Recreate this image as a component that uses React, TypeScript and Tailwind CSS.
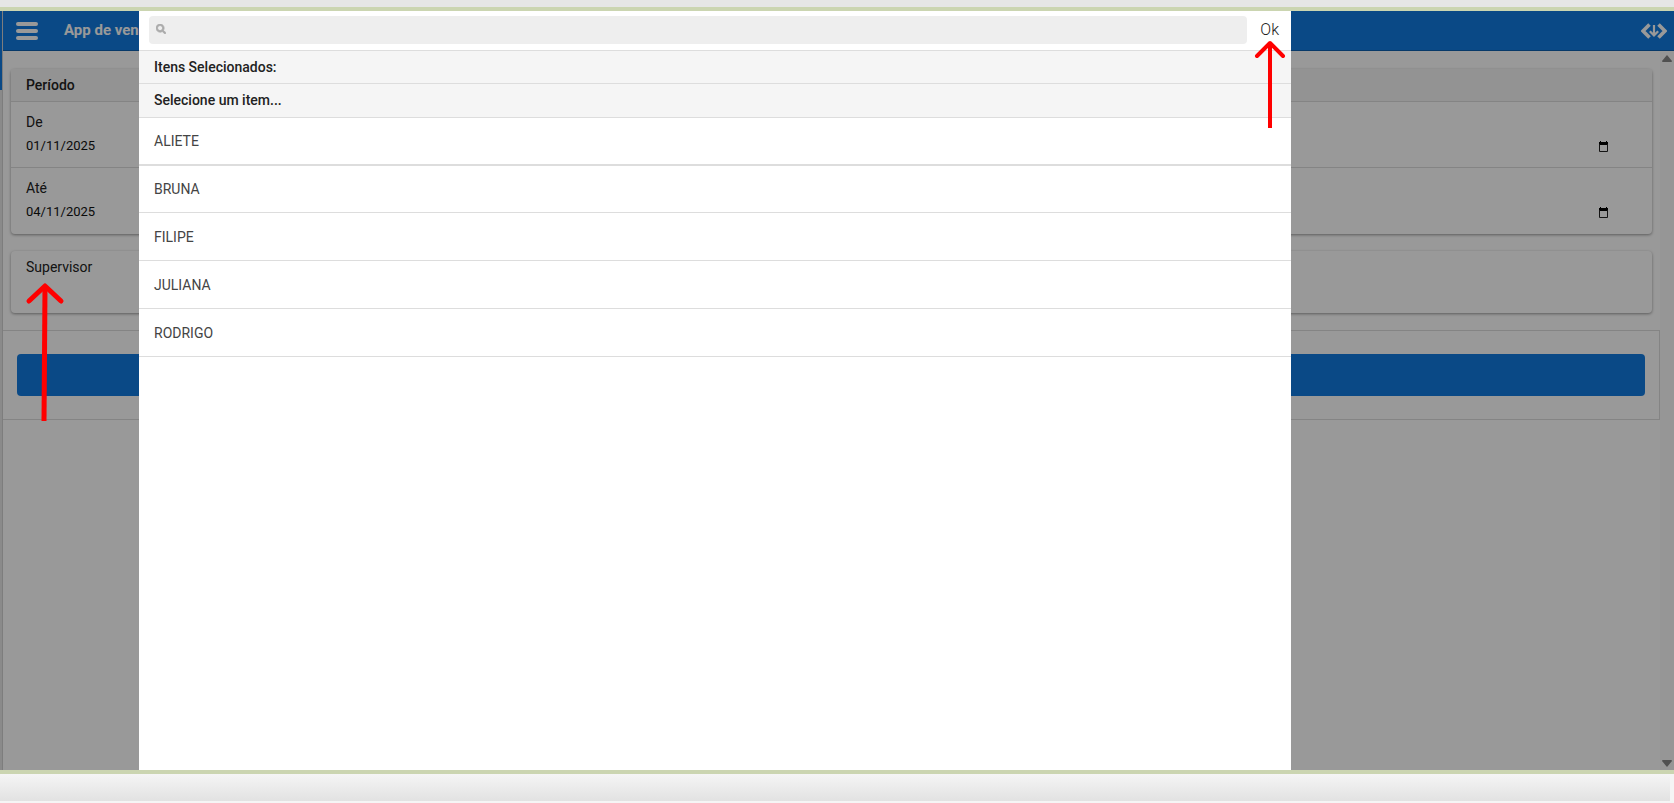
import { FaSearch } from "react-icons/fa";

const people = ["ALIETE", "BRUNA", "FILIPE", "JULIANA", "RODRIGO"];

function CodeDownloadIcon() {
  return (
    <svg width="26" height="16" viewBox="0 0 26 16" fill="none" stroke="white" aria-hidden="true">
      <path d="M8.5 1.5 L2 8 L8.5 14.5 M17.5 1.5 L24 8 L17.5 14.5" strokeWidth="3.6" />
      <path d="M13 2 V12 M8.8 8.2 L13 12.4 L17.2 8.2" strokeWidth="2.2" />
    </svg>
  );
}

function CalendarIcon() {
  return (
    <svg width="9" height="11" viewBox="0 0 9 11" aria-hidden="true">
      <path d="M0 1 H1 V0 H2 V1 H7 V0 H8 V1 H9 V4 H0 Z" fill="black" />
      <path d="M0.5 3 V10.5 H8.5 V3" fill="none" stroke="#222" />
    </svg>
  );
}

function DateRow({ id, label, value }: { id: string; label: string; value: string }) {
  return (
    <div className="flex h-[66px] flex-col px-[15px] pt-2.5">
      <label htmlFor={id} className="text-sm leading-5 text-[#222]">
        {label}
      </label>
      <div className="flex h-7 items-center">
        <input
          id={id}
          type="text"
          defaultValue={value}
          className="min-w-0 flex-1 bg-transparent text-[13px] text-[#111] outline-none"
        />
        <button type="button" aria-label={`Calendário: ${label}`} className="mr-[29px]">
          <CalendarIcon />
        </button>
      </div>
    </div>
  );
}

function UpArrow({ tall }: { tall?: boolean }) {
  return tall ? (
    <svg width="40" height="142" viewBox="0 0 40 142" fill="none" stroke="red" aria-hidden="true">
      <path d="M20 6 L19 140" strokeWidth="5" />
      <path d="M4 20 L20 5 L36 20" strokeWidth="5" strokeLinecap="round" strokeLinejoin="round" />
    </svg>
  ) : (
    <svg width="32" height="88" viewBox="0 0 32 88" fill="none" stroke="red" aria-hidden="true">
      <path d="M16 3 V88" strokeWidth="4" />
      <path d="M3 16 L16 3 L29 16" strokeWidth="4" strokeLinecap="round" strokeLinejoin="round" />
    </svg>
  );
}

function Page() {
  return (
    <div className="flex flex-1">
      <div className="w-[3px] shrink-0 border-r border-[#d0d0d0] bg-[#e6e6e6]">
        <div className="h-[79px] bg-[#127bdf]" />
      </div>
      <div className="flex min-w-0 flex-1 flex-col">
        <header className="flex h-10 items-center justify-between border-b border-[#0c60b0] bg-[#127bdf] pr-[7px] pl-[13px]">
          <div className="flex items-center gap-[26px]">
            <button type="button" aria-label="Menu" className="flex w-[22px] flex-col gap-[3px]">
              <span className="h-1 rounded-sm bg-white" />
              <span className="h-1 rounded-sm bg-white" />
              <span className="h-1 rounded-sm bg-white" />
            </button>
            <h1 className="text-[15px] font-bold text-white">App de vendas</h1>
          </div>
          <button type="button" aria-label="Baixar código">
            <CodeDownloadIcon />
          </button>
        </header>
        <div className="flex flex-1">
          <main className="min-w-0 flex-1 pt-[18px]">
            <section className="mx-2 divide-y divide-[#ddd] rounded-sm shadow-[0_1px_3px_rgba(0,0,0,0.4)]">
              <h2 className="h-[33px] bg-[#f5f5f5] px-[15px] text-sm leading-8 font-medium text-[#222]">Período</h2>
              <DateRow id="from" label="De" value="01/11/2025" />
              <DateRow id="to" label="Até" value="04/11/2025" />
            </section>
            <section className="mx-2 mt-[17px] h-[62px] rounded-sm px-[15px] pt-1.5 shadow-[0_1px_3px_rgba(0,0,0,0.4)]">
              <button type="button" className="block text-sm leading-5 text-[#222]">
                Supervisor
              </button>
            </section>
            <div className="mt-[17px] border-y border-r border-[#ddd] px-3.5 py-[23px]">
              <button type="button" aria-label="Confirmar" className="block h-[42px] w-full rounded bg-[#127bdf]" />
            </div>
          </main>
          <div className="flex w-[14px] shrink-0 flex-col items-center justify-between bg-[#fafafa] pt-1 pb-[3px]">
            <svg width="10" height="7" viewBox="0 0 10 7" aria-hidden="true">
              <path d="M5 0 L10 6 Q10 7 9 7 H1 Q0 7 0 6 Z" fill="#858585" />
            </svg>
            <svg width="10" height="7" viewBox="0 0 10 7" aria-hidden="true">
              <path d="M5 7 L10 1 Q10 0 9 0 H1 Q0 0 0 1 Z" fill="#858585" />
            </svg>
          </div>
        </div>
      </div>
    </div>
  );
}

function PickerDialog() {
  return (
    <div role="dialog" aria-label="Selecione um item" className="absolute inset-y-0 right-[383px] left-[139px] bg-white">
      <div className="flex h-10 items-start border-b border-[#ddd] pt-[5px] pr-3 pl-2.5">
        <label className="flex h-7 flex-1 rounded bg-[#eee] px-[7px]">
          <FaSearch className="mt-2 size-[10px] stroke-[#aaa] stroke-[40px] text-[#aaa]" />
          <input type="search" aria-label="Pesquisar" className="min-w-0 flex-1 bg-transparent px-2 text-sm outline-none" />
        </label>
        <button type="button" className="ml-[13px] text-base leading-7 font-light text-[#222]">
          Ok
        </button>
      </div>
      <h2 className="h-[33px] border-b border-[#ddd] bg-[#f5f5f5] px-[15px] text-sm leading-8 font-medium text-[#222]">
        Itens Selecionados:
      </h2>
      <h2 className="h-[33px] bg-[#f5f5f5] px-[15px] text-sm leading-8 font-medium text-[#222]">
        Selecione um item...
      </h2>
      <ul>
        {people.map((name, i) => (
          <li key={name} className={i < 2 ? "h-12 border-y border-[#ddd]" : "h-12 border-b border-[#ddd]"}>
            <button type="button" className="h-full w-full px-[15px] text-left text-sm text-[#444]">
              {name}
            </button>
          </li>
        ))}
      </ul>
      <div className="pointer-events-none absolute top-[29px] right-[5px]">
        <UpArrow />
      </div>
    </div>
  );
}

export default function App() {
  return (
    <div className="flex min-h-screen flex-col bg-[#f5f5f5] font-[Roboto,sans-serif]">
      <div className="h-[7px] bg-[#e6e6e6]" />
      <div className="relative flex flex-1 flex-col border-y-4 border-[#cbd5b1] bg-white">
        <Page />
        <div className="absolute inset-0 bg-black/40" />
        <PickerDialog />
        <div className="pointer-events-none absolute top-[270px] left-[25px]">
          <UpArrow tall />
        </div>
      </div>
      <div className="mr-1 mb-0.5 h-[27px] bg-linear-to-b from-[#f5f5f5] to-[#e2e2e2]" />
    </div>
  );
}
